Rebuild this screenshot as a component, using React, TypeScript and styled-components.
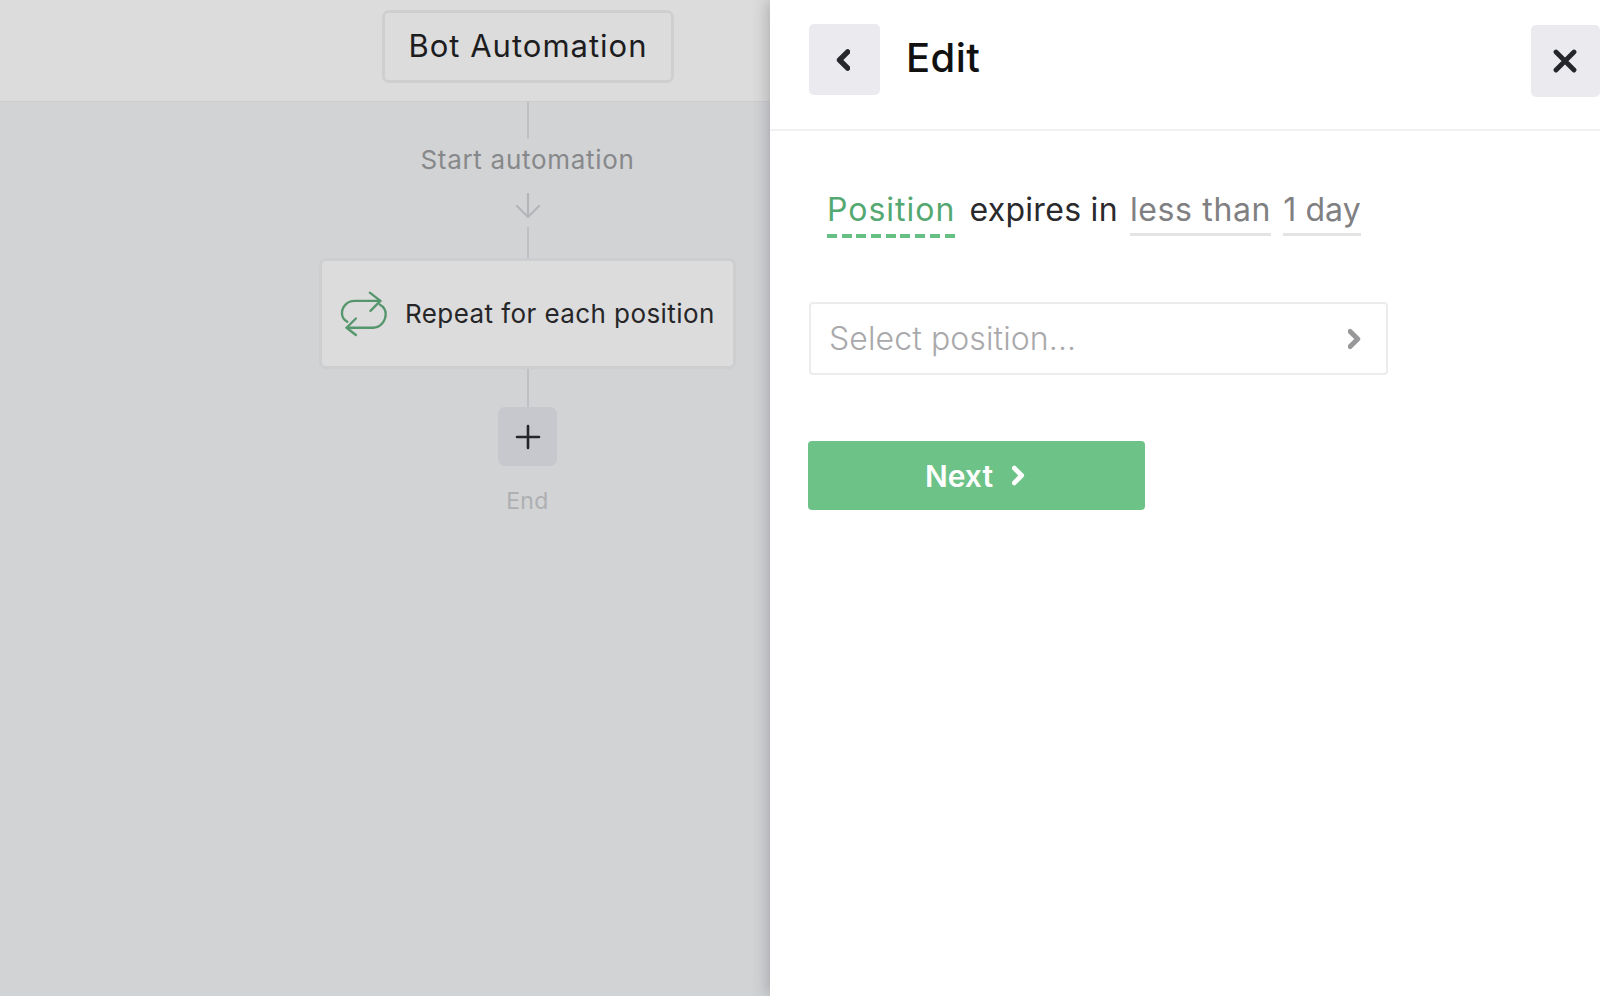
import React from "react";
import styled, { createGlobalStyle } from "styled-components";

const Global = createGlobalStyle`
  html, body { margin: 0; padding: 0; height: 100%; background: #fff; }
  body { font-family: Inter, "Open Sans", "Liberation Sans", sans-serif; }
`;

const Page = styled.div`
  display: flex;
  width: 1600px;
  height: 996px;
  overflow: hidden;
`;

const Canvas = styled.main`
  width: 770px;
  flex: none;
  background: #d2d3d5;
  display: flex;
  flex-direction: column;
`;

const TopBar = styled.header`
  height: 102px;
  flex: none;
  box-sizing: border-box;
  background: #dcdcdc;
  border-bottom: 1px solid #d0ccce;
  padding: 10px 0 0 382px;
`;

const TitleBox = styled.div`
  width: 292px;
  height: 73px;
  box-sizing: border-box;
  border: 3px solid #cfcfd1;
  border-radius: 7px;
  display: flex;
  align-items: center;
  justify-content: center;
  padding-bottom: 2px;
  font-size: 31px;
  letter-spacing: 1px;
  color: #1d1d1f;
`;

const Flow = styled.div`
  width: 417px;
  margin-left: 319px;
  display: flex;
  flex-direction: column;
  align-items: center;
`;

const Connector = styled.div<{ $h: number }>`
  width: 2px;
  height: ${(p) => p.$h}px;
  background: #bfc0c3;
`;

const StartLabel = styled.div`
  margin-top: 8px;
  height: 26px;
  line-height: 26px;
  font-size: 26px;
  letter-spacing: 0.7px;
  color: #87888a;
  white-space: nowrap;
`;

const ArrowMark = styled.svg`
  display: block;
  margin-top: 20px;
  margin-bottom: 8px;
`;

const StepCard = styled.div`
  width: 417px;
  height: 111px;
  box-sizing: border-box;
  background: #dcdcdc;
  border: 3px solid #cdced0;
  border-radius: 7px;
  display: flex;
  align-items: center;
  padding-left: 18px;
  gap: 17px;
`;

const StepText = styled.span`
  font-size: 26px;
  letter-spacing: 0.42px;
  color: #262628;
  white-space: nowrap;
`;

const AddButton = styled.div`
  width: 59px;
  height: 59px;
  background: #c7c8cd;
  border-radius: 7px;
  display: flex;
  align-items: center;
  justify-content: center;
`;

const EndLabel = styled.div`
  margin-top: 22px;
  font-size: 23px;
  letter-spacing: 0.4px;
  line-height: 26px;
  color: #aeafb1;
`;

const Panel = styled.aside`
  position: relative;
  flex: 1;
  background: #fff;
  box-shadow: -3px 0 14px rgba(60, 60, 70, 0.28);
`;

const PanelHeader = styled.header`
  height: 131px;
  box-sizing: border-box;
  border-bottom: 2px solid #f1f1f3;
  display: flex;
  align-items: flex-start;
  padding: 24px 0 0 39px;
`;

const BackButton = styled.button`
  width: 71px;
  height: 71px;
  padding: 0 3px 0 0;
  border: 0;
  border-radius: 5px;
  background: #ebebef;
  display: flex;
  align-items: center;
  justify-content: center;
  flex: none;
`;

const CloseButton = styled.button`
  width: 69px;
  height: 72px;
  padding: 0 2px 0 0;
  border: 0;
  border-radius: 5px;
  background: #ebebef;
  display: flex;
  align-items: center;
  justify-content: center;
  margin-top: 1px;
  margin-left: auto;
  flex: none;
`;

const PanelTitle = styled.h1`
  margin: 0 0 0 26px;
  height: 71px;
  line-height: 68px;
  font-size: 40px;
  letter-spacing: 0.4px;
  font-weight: 500;
  color: #111;
`;

const PanelBody = styled.div`
  padding: 57px 0 0 38px;
`;

const Sentence = styled.div`
  display: flex;
  align-items: flex-start;
  height: 50px;
  padding-left: 19px;
  font-size: 32px;
`;

const PlainWords = styled.span`
  line-height: 44px;
  margin-right: 12px;
  letter-spacing: 0.3px;
  color: #2a2a2c;
  white-space: nowrap;
`;

const FieldToken = styled.span`
  height: 50px;
  box-sizing: border-box;
  line-height: 44px;
  margin-right: 14px;
  letter-spacing: 1px;
  color: #55a871;
  white-space: nowrap;
  background: repeating-linear-gradient(90deg, #66c084 0 10px, transparent 10px 14.7px) left bottom / 100% 4px no-repeat;
`;

const ValueToken = styled.span<{ $ls: number; $gap: number }>`
  height: 48px;
  box-sizing: border-box;
  line-height: 44px;
  margin-right: ${(p) => p.$gap}px;
  letter-spacing: ${(p) => p.$ls}px;
  color: #808083;
  border-bottom: 3px solid #e4e4e6;
  white-space: nowrap;
`;

const SelectBox = styled.div`
  margin-top: 64px;
  margin-left: 1px;
  width: 579px;
  height: 73px;
  box-sizing: border-box;
  border: 2px solid #ececee;
  border-radius: 4px;
  display: flex;
  align-items: center;
  justify-content: space-between;
  padding: 0 25px 0 18px;
  font-size: 32px;
  font-weight: 300;
  letter-spacing: 0.1px;
  color: #a9a9ab;
`;

const NextButton = styled.button`
  margin-top: 66px;
  width: 337px;
  height: 69px;
  border: 0;
  border-radius: 4px;
  background: #6cc287;
  color: #fff;
  display: flex;
  align-items: center;
  justify-content: center;
  gap: 19px;
  padding: 0 3px 0 0;
  font-family: inherit;
  font-size: 30px;
  font-weight: 600;
`;

const Chevron: React.FC<{ dir: "left" | "right"; color: string; w: number; h: number; sw: number }> = ({ dir, color, w, h, sw }) => (
  <svg width={w} height={h} viewBox="0 0 12 20" fill="none">
    <path
      d={dir === "left" ? "M10 3 L3 10 L10 17" : "M2 3 L9 10 L2 17"}
      stroke={color}
      strokeWidth={sw}
      strokeLinecap="round"
      strokeLinejoin="round"
    />
  </svg>
);

const RepeatIcon = () => (
  <svg width="48" height="47" viewBox="60 115 145 140" fill="none" stroke="#55966c" strokeWidth="7" strokeLinecap="round" strokeLinejoin="round">
    <path d="M150 122 L182 147 L152 177" />
    <path d="M182 147 H104 C82 147 66 164 66 184 C66 195 72 204 82 210" />
    <path d="M108 200 L80 228 L108 250" />
    <path d="M80 228 H160 C182 228 198 208 198 186 C198 174 192 165 180 158" />
  </svg>
);

export default function App() {
  return (
    <Page>
      <Global />
      <Canvas>
        <TopBar>
          <TitleBox>Bot Automation</TitleBox>
        </TopBar>
        <Flow>
          <Connector $h={37} />
          <StartLabel>Start automation</StartLabel>
          <ArrowMark width="28" height="26" viewBox="0 0 28 26" fill="none" stroke="#b4b5b8" strokeWidth="2.2" strokeLinecap="round" strokeLinejoin="round">
            <path d="M14 1 V24 M3 13 L14 24 L25 13" />
          </ArrowMark>
          <Connector $h={31} />
          <StepCard>
            <RepeatIcon />
            <StepText>Repeat for each position</StepText>
          </StepCard>
          <Connector $h={38} />
          <AddButton>
            <svg width="26" height="26" viewBox="0 0 26 26" fill="none" stroke="#26262a" strokeWidth="2.6" strokeLinecap="round">
              <path d="M13 2 V24 M2 13 H24" />
            </svg>
          </AddButton>
          <EndLabel>End</EndLabel>
        </Flow>
      </Canvas>
      <Panel>
        <PanelHeader>
          <BackButton>
            <Chevron dir="left" color="#26272c" w={14} h={24} sw={4.6} />
          </BackButton>
          <PanelTitle>Edit</PanelTitle>
          <CloseButton>
            <svg width="24" height="24" viewBox="0 0 24 24" fill="none" stroke="#25262b" strokeWidth="4.8" strokeLinecap="round">
              <path d="M3 3 L21 21 M21 3 L3 21" />
            </svg>
          </CloseButton>
        </PanelHeader>
        <PanelBody>
          <Sentence>
            <FieldToken>Position</FieldToken>
            <PlainWords>expires in</PlainWords>
            <ValueToken $ls={0.65} $gap={12}>less than</ValueToken>
            <ValueToken $ls={0.1} $gap={0}>1 day</ValueToken>
          </Sentence>
          <SelectBox>
            <span>Select position...</span>
            <Chevron dir="right" color="#98989b" w={13} h={22} sw={4.6} />
          </SelectBox>
          <NextButton>
            <span>Next</span>
            <Chevron dir="right" color="#ffffff" w={13} h={21} sw={4.6} />
          </NextButton>
        </PanelBody>
      </Panel>
    </Page>
  );
}
